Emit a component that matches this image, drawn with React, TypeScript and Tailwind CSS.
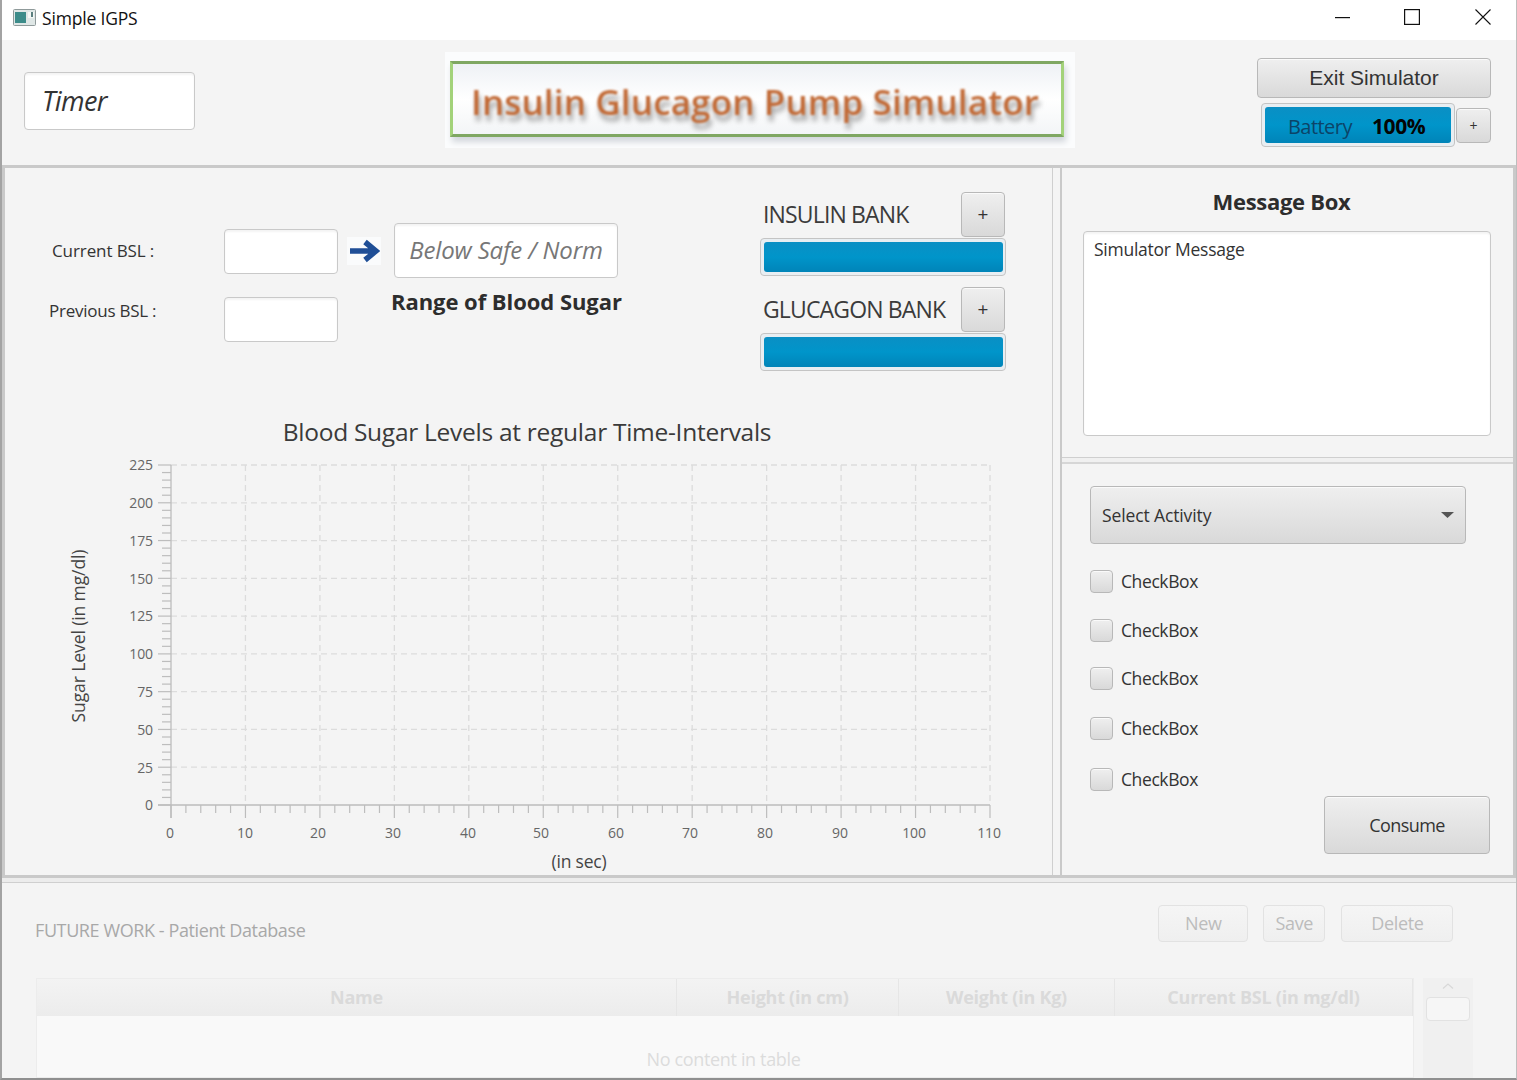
import React from "react";

const btn = "bg-gradient-to-b from-[#efefef] to-[#d9d9d9] border border-[#b8b8b8] rounded-[4px] shadow-[inset_0_1px_0_#fafafa]";
const field = "bg-white border border-[#c9c9c9] rounded-[4px] shadow-[inset_0_2px_2px_#f4f4f4]";

function Bar({ className = "" }: { className?: string }) {
  return (
    <div className={`w-[246px] h-[38px] p-[3px] bg-[#e8eef2] border border-[#c4c4c4] rounded-[4px] ${className}`}>
      <div className="h-full w-[239px] rounded-[3px] bg-gradient-to-b from-[#0a8fc4] via-[#0095ca] to-[#0084b8]" />
    </div>
  );
}

function PlusButton({ className = "" }: { className?: string }) {
  return <div className={`${btn} flex items-center justify-center text-[#333] ${className}`}>+</div>;
}

function Check({ className = "" }: { className?: string }) {
  return (
    <div className={`flex items-center h-[24px] ${className}`}>
      <div className={`${btn} w-[23px] h-[23px]`} />
      <span className="ml-[8px] text-[17.5px] tracking-[-0.4px] text-[#333]">CheckBox</span>
    </div>
  );
}

function Chart() {
  const ax = (v: number) => 171 + (v / 110) * 819;
  const ay = (v: number) => 805 - (v / 225) * 340;
  const xLabels: [string, number][] = [["0",170],["10",245],["20",318],["30",393],["40",468],["50",541],["60",616],["70",690],["80",765],["90",840],["100",914],["110",989]];
  const yLabels: [string, number][] = [["0",805],["25",768],["50",730],["75",692],["100",654],["125",616],["150",579],["175",541],["200",503],["225",465]];
  const xs = Array.from({ length: 56 }, (_, i) => i * 2);
  const ys = Array.from({ length: 46 }, (_, i) => i * 5);
  return (
    <svg width="1047" height="465" viewBox="5 410 1047 465" className="block" style={{ fontFamily: "'Open Sans', sans-serif" }}>
      <text x="527" y="441" textAnchor="middle" fontSize="24.5" fill="#3a3a3a" letterSpacing="-0.27">Blood Sugar Levels at regular Time-Intervals</text>
      {Array.from({ length: 11 }, (_, i) => (i + 1) * 10).map((v) => (
        <line key={v} x1={ax(v)} x2={ax(v)} y1="465" y2="805" stroke="#dcdcdc" strokeWidth="1.3" strokeDasharray="6 4" />
      ))}
      {Array.from({ length: 9 }, (_, i) => (i + 1) * 25).map((v) => (
        <line key={v} x1="171" x2="990" y1={ay(v)} y2={ay(v)} stroke="#dcdcdc" strokeWidth="1.3" strokeDasharray="6 4" />
      ))}
      <line x1="171" x2="171" y1="465" y2="818" stroke="#bdbdbd" strokeWidth="1.3" />
      <line x1="158" x2="990" y1="805" y2="805" stroke="#bdbdbd" strokeWidth="1.3" />
      {ys.map((v) => (
        <line key={v} x1={v % 25 === 0 ? 158 : 162} x2="171" y1={ay(v)} y2={ay(v)} stroke="#bdbdbd" strokeWidth="1.2" />
      ))}
      {xs.map((v) => (
        <line key={v} x1={ax(v)} x2={ax(v)} y1="805" y2={v % 10 === 0 ? 818 : 813} stroke="#bdbdbd" strokeWidth="1.2" />
      ))}
      {yLabels.map(([t, y]) => (
        <text key={t} x="153" y={y + 5} textAnchor="end" fontSize="14" fill="#666" letterSpacing="-0.1">{t}</text>
      ))}
      {xLabels.map(([t, x]) => (
        <text key={t} x={x} y="838" textAnchor="middle" fontSize="14" fill="#666" letterSpacing="-0.1">{t}</text>
      ))}
      <text x="579" y="868" textAnchor="middle" fontSize="17.5" fill="#444" letterSpacing="-0.2">(in sec)</text>
      <text transform="translate(85 636) rotate(-90)" textAnchor="middle" fontSize="17.5" fill="#444" letterSpacing="-0.1">Sugar Level (in mg/dl)</text>
    </svg>
  );
}

export default function App() {
  const disabledBtn = "h-[37px] flex items-center justify-center bg-gradient-to-b from-[#f5f5f5] to-[#efefef] border border-[#e2e2e2] rounded-[4px] text-[18px] tracking-[-0.35px] text-[#bcbcbc]";
  const th = "h-full flex items-center justify-center border-r border-[#e6e6e6] font-bold text-[18px] tracking-[-0.25px] text-[#dadada]";
  return (
    <div className="w-[1517px] h-[1080px] overflow-hidden flex flex-col bg-[#f4f4f4] border-l-2 border-b-2 border-r border-l-[#a3a3a3] border-b-[#8f8f8f] border-r-[#bdbdbd] font-['Open_Sans',sans-serif]">
      {/* Title bar */}
      <div className="h-[40px] shrink-0 bg-white flex items-center">
        <svg width="23" height="17" viewBox="0 0 23 17" className="ml-[11px] -mt-[6px]">
          <rect x="0.5" y="0.5" width="22" height="16" rx="1" fill="#dfe7e6" stroke="#8f9a9a" />
          <rect x="2" y="3" width="11" height="11" fill="#3c8c8a" />
          <rect x="15" y="3" width="6" height="6" fill="#f4f7f5" />
          <rect x="18" y="3" width="2" height="5" fill="#5b7f7f" />
        </svg>
        <span className="ml-[6px] w-[96px] whitespace-nowrap text-[17.5px] tracking-[-0.18px] text-[#111] -mt-[3px]">Simple IGPS</span>
        <svg width="15" height="2" viewBox="0 0 15 2" className="ml-[1197px] -mt-[4px]"><rect width="15" height="1.2" fill="#111" /></svg>
        <svg width="16" height="16" viewBox="0 0 16 16" className="ml-[54px] -mt-[6px]"><rect x="0.6" y="0.6" width="14.8" height="14.8" fill="none" stroke="#111" strokeWidth="1.2" /></svg>
        <svg width="16" height="16" viewBox="0 0 16 16" className="ml-[55px] -mt-[6px]"><path d="M0.5 0.5 15.5 15.5M15.5 0.5 0.5 15.5" stroke="#111" strokeWidth="1.1" /></svg>
      </div>

      {/* Header */}
      <div className="h-[125px] shrink-0 flex items-start">
        <div className={`${field} ml-[22px] mt-[32px] w-[171px] h-[58px] flex items-center pl-[17px] italic text-[27px] tracking-[-0.6px] text-[#333]`}>Timer</div>
        <div className="ml-[250px] mt-[12px] w-[630px] h-[96px] bg-[#fbfcfd] pl-[5px] pt-[9px]">
          <div className="w-[614px] h-[76px] border-[3px] border-y-[#7fa762] border-x-[#a3d27a] bg-gradient-to-b from-[#eef1f5] via-white to-[#f3f5f7] flex items-center justify-center shadow-[2px_5px_6px_#d3d7dc]">
            <span className="font-semibold text-[35px] leading-none tracking-[0.15px] text-[#c26a36] blur-[1px] [text-shadow:2px_6px_5px_#9a9a9a] mt-[5px] -ml-[4px]">Insulin Glucagon Pump Simulator</span>
          </div>
        </div>
        <div className="ml-[182px] mt-[18px] w-[234px] flex flex-col">
          <div className={`${btn} h-[40px] flex items-center justify-center font-['Liberation_Sans',sans-serif] text-[21px] text-[#333]`}>Exit Simulator</div>
          <div className="flex mt-[5px] pl-[4px] items-center">
            <div className="w-[195px] h-[44px] p-[3px] bg-[#e8eef2] border border-[#c4c4c4] rounded-[4px]">
              <div className="h-full rounded-[3px] bg-gradient-to-b from-[#0a8fc4] via-[#0095ca] to-[#0084b8] flex items-center pl-[23px] pt-[3px]">
                <span className="w-[84px] text-[20px] tracking-[-0.55px] text-[#0c4468]">Battery</span>
                <span className="text-[21px] tracking-[-0.4px] font-bold text-[#050505]">100%</span>
              </div>
            </div>
            <PlusButton className="ml-[1px] w-[35px] h-[35px] text-[14px]" />
          </div>
        </div>
      </div>

      {/* Main */}
      <div className="h-[713px] shrink-0 flex border-t-[3px] border-b-[3px] border-[#c9c9c9]">
        <div className="w-[1051px] shrink-0 border-l-[3px] border-[#c9c9c9] border-r border-r-[#cfcfcf] flex flex-col">
          <div className="h-[242px] shrink-0 flex items-start">
            <div className="mt-[61px] w-[333px]">
              <div className="flex items-start h-[45px]">
                <span className="pl-[47px] pt-[9px] w-[219px] text-[17px] tracking-[-0.1px] text-[#333]">Current BSL :</span>
                <div className={`${field} w-[114px] h-[45px]`} />
              </div>
              <div className="flex items-start h-[45px] mt-[23px]">
                <span className="pl-[44px] mt-[1px] w-[219px] text-[17px] tracking-[-0.25px] text-[#333]">Previous BSL :</span>
                <div className={`${field} w-[114px] h-[45px]`} />
              </div>
            </div>
            <div className="ml-[9px] mt-[69px] w-[34px] h-[28px] bg-[#fafbfc] flex items-center justify-center">
              <svg width="32" height="24" viewBox="0 0 32 24">
                <path d="M2 12H27M17 3 28 12 17 21" fill="none" stroke="#1f4e96" strokeWidth="5.5" />
              </svg>
            </div>
            <div className="ml-[13px] mt-[55px] w-[224px]">
              <div className={`${field} h-[55px] flex items-center justify-center pb-[2px] italic text-[24px] tracking-[-0.15px] text-[#777]`}>Below Safe / Norm</div>
              <div className="mt-[7px] -ml-[3px] whitespace-nowrap font-bold text-[22px] leading-[32px] tracking-[-0.05px] text-[#2d2d2d]">Range of Blood Sugar</div>
            </div>
            <div className="ml-[142px] mt-[24px] w-[246px]">
              <div className="flex items-center justify-between h-[45px] pr-[1px]">
                <span className="pl-[3px] text-[23px] tracking-[-0.85px] text-[#3b3b3b]">INSULIN BANK</span>
                <PlusButton className="w-[44px] h-[45px] text-[19px]" />
              </div>
              <Bar className="mt-[1px]" />
              <div className="flex items-center justify-between h-[45px] pr-[1px] mt-[11px]">
                <span className="pl-[3px] text-[23px] tracking-[-0.85px] text-[#3b3b3b]">GLUCAGON BANK</span>
                <PlusButton className="w-[44px] h-[45px] text-[19px]" />
              </div>
              <Bar className="mt-[1px]" />
            </div>
          </div>
          <Chart />
        </div>

        <div className="w-[9px] shrink-0 border-r-[2px] border-[#c9c9c9]" />

        <div className="w-[454px] shrink-0 flex flex-col border-r-[3px] border-[#c9c9c9]">
          <div className="h-[290px] shrink-0 border-b border-[#cfcfcf] flex flex-col">
            <div className="mt-[16px] w-[439px] text-center font-bold text-[22px] leading-[34px] tracking-[-0.3px] text-[#2d2d2d]">Message Box</div>
            <div className={`${field} ml-[21px] mt-[13px] w-[408px] h-[205px] pl-[10px] pt-[4px] text-[17.5px] tracking-[-0.25px] text-[#333]`}>Simulator Message</div>
          </div>
          <div className="h-[6px] shrink-0 bg-[#f0f0f0] border-b-2 border-[#d6d6d6]" />
          <div className="flex-1 flex flex-col pl-[28px] relative">
            <div className={`${btn} mt-[22px] w-[376px] h-[58px] flex items-center justify-between pl-[11px] pr-[11px] text-[17.5px] tracking-[-0.12px] text-[#333]`}>
              <span>Select Activity</span>
              <svg width="13" height="6" viewBox="0 0 13 6"><path d="M0 0H13L6.5 6Z" fill="#555" /></svg>
            </div>
            <Check className="mt-[25px]" />
            <Check className="mt-[25px]" />
            <Check className="mt-[24px]" />
            <Check className="mt-[26px]" />
            <Check className="mt-[27px]" />
            <div className={`${btn} mt-[5px] ml-[234px] w-[166px] h-[58px] flex items-center justify-center text-[18px] tracking-[-0.55px] text-[#333]`}>Consume</div>
          </div>
        </div>
      </div>

      {/* Bottom */}
      <div className="flex-1 min-h-0 flex flex-col">
        <div className="h-[5px] shrink-0 bg-[#ececec] border-b border-[#cfcfcf]" />
        <div className="flex items-start h-[37px] mt-[22px] shrink-0">
          <span className="ml-[33px] mt-[12px] text-[18px] tracking-[-0.4px] text-[#a8a8a8]">FUTURE WORK - Patient Database</span>
          <div className={`${disabledBtn} ml-[853px] w-[90px]`}>New</div>
          <div className={`${disabledBtn} ml-[15px] w-[62px]`}>Save</div>
          <div className={`${disabledBtn} ml-[16px] w-[112px]`}>Delete</div>
        </div>
        <div className="flex flex-1 min-h-0 mt-[36px] overflow-hidden">
          <div className="ml-[34px] w-[1378px] border border-[#ececec] flex flex-col">
            <div className="h-[37px] shrink-0 flex bg-gradient-to-b from-[#f3f3f3] to-[#ececec]">
              <div className={`${th} w-[640px]`}>Name</div>
              <div className={`${th} w-[222px]`}>Height (in cm)</div>
              <div className={`${th} w-[216px]`}>Weight (in Kg)</div>
              <div className={`${th} w-[298px]`}>Current BSL (in mg/dl)</div>
            </div>
            <div className="flex-1 bg-[#f9f9f9] flex justify-center pt-[31px] pr-[3px] text-[18px] leading-[24px] tracking-[-0.35px] text-[#dcdcdc]">No content in table</div>
          </div>
          <div className="ml-[9px] w-[50px] bg-[#f0f0f0] flex flex-col items-center">
            <svg width="12" height="6" viewBox="0 0 12 6" className="mt-[5px]"><path d="M1 5.5 6 1l5 4.5" fill="none" stroke="#d8d8d8" strokeWidth="1.2" /></svg>
            <div className="mt-[8px] w-[44px] h-[24px] bg-[#f6f6f6] border border-[#e2e2e2] rounded-[4px]" />
          </div>
        </div>
      </div>
    </div>
  );
}
